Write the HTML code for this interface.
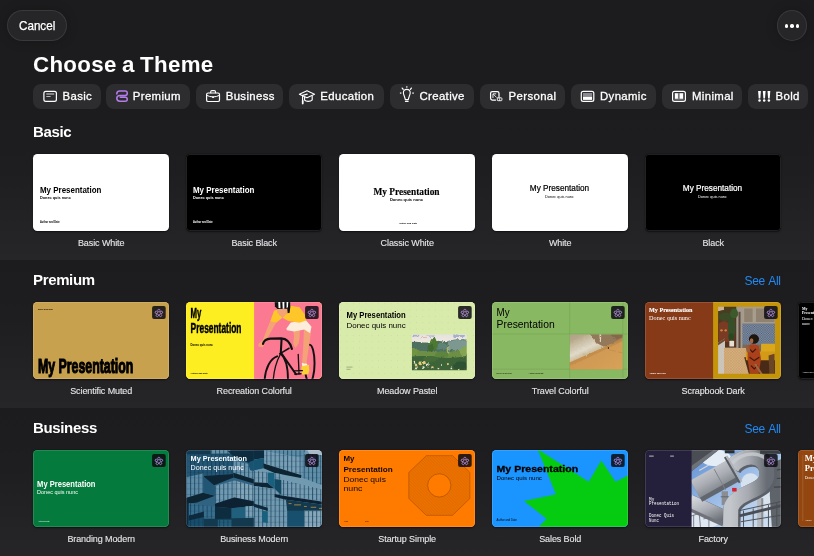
<!DOCTYPE html>
<html lang="en">
<head>
<meta charset="utf-8">
<title>Choose a Theme</title>
<style>
*{box-sizing:border-box;margin:0;padding:0}
html,body{width:814px;height:556px;overflow:hidden;background:#1c1c1e}
body{position:relative;font-family:"Liberation Sans",sans-serif;color:#fff;-webkit-font-smoothing:antialiased}
#root{position:absolute;left:0;top:0;width:814px;height:556px;will-change:transform}
.band{position:absolute;left:0;width:814px;height:148px;background:linear-gradient(#1c1c1e 0%,#1e1e20 40%,#262628 100%)}
.btn{position:absolute;background:#262628;border:1px solid rgba(255,255,255,.09);box-shadow:0 0 12px rgba(0,0,0,.22)}
.cancel{left:7px;top:10px;width:59.5px;height:30.5px;border-radius:15.5px}
.cancel span{position:absolute;left:10.6px;top:7.7px;font-size:12.6px;line-height:15px;letter-spacing:0;color:#fff;-webkit-text-stroke:.25px #fff;transform:scaleX(.925);transform-origin:0 0;white-space:nowrap}
.more{left:776.5px;top:10px;width:30.8px;height:30.8px;border-radius:50%}
.more i{position:absolute;top:13.3px;width:3.4px;height:3.4px;border-radius:50%;background:#fff}
h1{position:absolute;left:33px;top:50.6px;font-size:22.3px;line-height:28px;font-weight:bold;letter-spacing:.32px;word-spacing:-1.2px;white-space:nowrap}
.chip{position:absolute;top:83.5px;height:25px;border-radius:8px;background:#2d2d30}
.chip span{position:absolute;top:5.5px;font-size:11.4px;line-height:15px;white-space:nowrap;color:#fff;-webkit-text-stroke:.3px #fff;letter-spacing:.36px}
.chip svg{position:absolute;overflow:visible}
h2{position:absolute;left:33px;font-size:15px;line-height:18px;font-weight:bold;letter-spacing:-.35px;white-space:nowrap}
.see{position:absolute;left:744.5px;font-size:12px;line-height:15px;color:#1f8af5;letter-spacing:-.3px;word-spacing:.9px;white-space:nowrap}
.th{position:absolute;width:136.2px;height:76.5px;border-radius:4.4px;overflow:hidden;box-shadow:0 .5px 1.6px rgba(0,0,8,.55)}
.th:after{content:"";position:absolute;left:0;top:0;right:0;bottom:0;border-radius:4.4px;box-shadow:inset 0 0 0 .8px rgba(255,255,255,.17)}
.lb{position:absolute;width:136.2px;text-align:center;font-size:9px;line-height:12px;color:#e4e4e8;letter-spacing:-.1px;white-space:nowrap;-webkit-text-stroke:.12px #e4e4e8}
.th svg{position:absolute;left:0;top:0;width:136.2px;height:76.5px}
.pb{position:absolute;right:6px;top:6px;width:13px;height:13px;border-radius:2px;background:rgba(20,20,24,.92)}
</style>
</head>
<body>
<div id="root">
<div class="band" style="top:112px"></div>
<div class="band" style="top:260px"></div>
<div class="band" style="top:408px"></div>

<div class="btn cancel"><span>Cancel</span></div>
<div class="btn more"><i style="left:7.4px"></i><i style="left:12.9px"></i><i style="left:18.4px"></i></div>
<h1>Choose a Theme</h1>

<!-- chips -->
<div class="chip" style="left:33px;width:68px"><span style="left:29.5px">Basic</span></div>
<div class="chip" style="left:106.3px;width:84px"><span style="left:26.5px">Premium</span></div>
<div class="chip" style="left:196.2px;width:87px"><span style="left:29.5px">Business</span></div>
<div class="chip" style="left:288.9px;width:94.8px"><span style="left:31.4px">Education</span></div>
<div class="chip" style="left:389.7px;width:84px"><span style="left:29.8px">Creative</span></div>
<div class="chip" style="left:480px;width:85px"><span style="left:28.6px">Personal</span></div>
<div class="chip" style="left:570.8px;width:85.5px"><span style="left:29.2px">Dynamic</span></div>
<div class="chip" style="left:662px;width:80px"><span style="left:30px">Minimal</span></div>
<div class="chip" style="left:748.2px;width:60px"><span style="left:27.3px">Bold</span></div>

<svg class="icons" style="position:absolute;left:0;top:82px;width:814px;height:30px" viewBox="0 82 814 30" fill="none" stroke="#fff" stroke-width="1.2" stroke-linecap="round" stroke-linejoin="round">
<!-- basic -->
<rect x="43.9" y="91.3" width="12.5" height="10.1" rx="1.9"/>
<path d="M46.3 94H54.2" stroke="#b4b4b8" stroke-width="1.3" stroke-linecap="butt"/>
<path d="M46.3 96.5H50.6" stroke="#c8c8cc" stroke-width=".9" stroke-linecap="butt"/>
<!-- premium -->
<path d="M116.8 93.9C116.8 92.2 118 91 119.7 91H125.1A2.2 2.2 0 0 1 125.1 95.4H119.9C118 95.4 116.8 96.6 116.8 98.3C116.8 100 118 101.2 119.9 101.2H125.3A1.95 1.95 0 0 0 125.3 97.3H120.2" stroke="#b47bea" stroke-width="1.5"/>
<!-- business -->
<rect x="206.6" y="93" width="12.9" height="8.5" rx="1.6"/>
<path d="M210.7 92.8V91.8Q210.7 90.6 211.9 90.6H214.3Q215.5 90.6 215.5 91.8V92.8" stroke-width="1.1"/>
<path d="M206.8 95.4Q213.05 98.6 219.3 95.4" stroke-width="1"/>
<rect x="212.1" y="96.4" width="1.9" height="1.5" rx=".4" fill="#fff" stroke="none"/>
<!-- education -->
<path d="M299.4 94.2L307 90.7L314.5 94.2L307 97.7Z" stroke-width="1.15"/>
<path d="M307.2 94.1L302.6 95.4V103.6" stroke-width="1.15"/><path d="M302.7 100.8V103.5" stroke-width="1.7"/>
<path d="M304.6 97.2V100.2C306 101.9 310.6 101.9 312.2 99.9V96.2" stroke-width="1.15"/>
<!-- creative -->
<path d="M406.8 89.4C404.5 89.4 403.2 91 403.4 93C403.6 95 405 97.4 405.3 99.6H408.3C408.6 97.4 410 95 410.2 93C410.4 91 409.1 89.4 406.8 89.4Z" stroke-width="1.1"/>
<path d="M405.5 101.3H408.1" stroke-width="1.3"/>
<path d="M402.2 88.1L403.2 89.3M411.4 88.1L410.4 89.3" stroke-width="1.25"/>
<g fill="#e8e8ec" stroke="none"><rect x="406.15" y="86.2" width="1.3" height="1.5"/><rect x="399.9" y="92.4" width="1.5" height="1.4"/><rect x="412.3" y="92.4" width="1.5" height="1.4"/></g>
<!-- personal -->
<path d="M495.6 100H492.3Q490.6 100 490.6 98.3V93.2Q490.6 91.5 492.3 91.5H497.3Q499 91.5 499 93.2V96.4" stroke-width="1.25"/>
<path d="M492.95 98V93.85H496.2" stroke-width=".9" stroke-linecap="butt" stroke-linejoin="miter"/><path d="M493.3 94.2L496.6 97.5" stroke-width=".8" stroke-linecap="butt"/>
<rect x="497.3" y="97.8" width="4.6" height="2.9" rx=".7" stroke-width=".9"/>
<path d="M499.6 98V100.5" stroke-width=".7"/>
<!-- dynamic -->
<rect x="581.3" y="91.3" width="12.5" height="10.1" rx="1.9"/>
<rect x="583" y="93" width="9.1" height="3.3" fill="#8a8a90" stroke="none"/>
<rect x="583" y="96.6" width="9.1" height="3.3" fill="#fff" stroke="none"/>
<!-- minimal -->
<rect x="672.6" y="91.3" width="12.8" height="10.1" rx="1.9"/>
<rect x="674.4" y="93" width="9.2" height="6.8" fill="#77777c" stroke="none"/>
<rect x="675" y="93.3" width="2.9" height="5.4" fill="#fff" stroke="none"/>
<rect x="679.7" y="93.3" width="3.3" height="5.4" fill="#fff" stroke="none"/>
<!-- bold -->
<g fill="#fff" stroke="none">
<path d="M758.1 91H760.9L760.3 98.5H758.7Z"/><circle cx="759.5" cy="100.5" r="1.25"/>
<path d="M762.8 91H765.6L765 98.5H763.4Z"/><circle cx="764.2" cy="100.5" r="1.25"/>
<path d="M767.5 91H770.3L769.7 98.5H768.1Z"/><circle cx="768.9" cy="100.5" r="1.25"/>
</g>
</svg>

<!-- BASIC -->
<h2 style="top:122.5px">Basic</h2>
<div class="th" style="left:33.1px;top:154.3px;background:#fff"><svg viewBox="0 0 136.2 76.5" preserveAspectRatio="none"><g transform="translate(-.1,-.3)"><text x="7.1" y="39.1" font-family="Liberation Sans, sans-serif" font-size="9.2" fill="#000" font-weight="bold" textLength="61.4" lengthAdjust="spacingAndGlyphs">My Presentation</text>
<text x="7.1" y="45.6" font-family="Liberation Sans, sans-serif" font-size="4.05" fill="#000" font-weight="bold" textLength="30.8" lengthAdjust="spacingAndGlyphs">Donec quis nunc</text>
<text x="7.1" y="69.8" font-family="Liberation Sans, sans-serif" font-size="2.6" fill="#000" font-weight="bold" textLength="19.8" lengthAdjust="spacingAndGlyphs">Author and Date</text>
</g></svg></div>
<div class="th" style="left:186.1px;top:154.3px;background:#000"><svg viewBox="0 0 136.2 76.5" preserveAspectRatio="none"><g transform="translate(-.1,-.3)"><text x="7.1" y="39.1" font-family="Liberation Sans, sans-serif" font-size="9.2" fill="#fff" font-weight="bold" textLength="61.4" lengthAdjust="spacingAndGlyphs">My Presentation</text>
<text x="7.1" y="45.6" font-family="Liberation Sans, sans-serif" font-size="4.05" fill="#fff" font-weight="bold" textLength="30.8" lengthAdjust="spacingAndGlyphs">Donec quis nunc</text>
<text x="7.1" y="69.8" font-family="Liberation Sans, sans-serif" font-size="2.6" fill="#fff" font-weight="bold" textLength="19.8" lengthAdjust="spacingAndGlyphs">Author and Date</text>
</g></svg></div>
<div class="th" style="left:339.1px;top:154.3px;background:#fff"><svg viewBox="0 0 136.2 76.5" preserveAspectRatio="none"><g transform="translate(-.1,-.3)"><text x="67.6" y="41.2" font-family="Liberation Serif, serif" font-size="10.2" fill="#000" font-weight="bold" text-anchor="middle" textLength="66.2" lengthAdjust="spacingAndGlyphs" stroke="#000" stroke-width="0.15">My Presentation</text>
<text x="67.6" y="47.7" font-family="Liberation Sans, sans-serif" font-size="4.2" fill="#000" font-weight="bold" text-anchor="middle" textLength="33.2" lengthAdjust="spacingAndGlyphs">Donec quis nunc</text>
<text x="69" y="70" font-family="Liberation Sans, sans-serif" font-size="2.4" fill="#000" font-weight="bold" text-anchor="middle" textLength="18.5" lengthAdjust="spacingAndGlyphs">Author and Date</text>
</g></svg></div>
<div class="th" style="left:492.1px;top:154.3px;background:#fff"><svg viewBox="0 0 136.2 76.5" preserveAspectRatio="none"><g transform="translate(-.1,-.3)"><text x="67.6" y="37.7" font-family="Liberation Sans, sans-serif" font-size="9.2" fill="#000" text-anchor="middle" textLength="59.4" lengthAdjust="spacingAndGlyphs" stroke="#000" stroke-width="0.22">My Presentation</text>
<text x="67.6" y="44.2" font-family="Liberation Sans, sans-serif" font-size="4.3" fill="#000" text-anchor="middle" textLength="29" lengthAdjust="spacingAndGlyphs">Donec quis nunc</text>
</g></svg></div>
<div class="th" style="left:645.1px;top:154.3px;background:#000"><svg viewBox="0 0 136.2 76.5" preserveAspectRatio="none"><g transform="translate(-.1,-.3)"><text x="67.6" y="37.7" font-family="Liberation Sans, sans-serif" font-size="9.2" fill="#fff" text-anchor="middle" textLength="59.4" lengthAdjust="spacingAndGlyphs" stroke="#fff" stroke-width="0.22">My Presentation</text>
<text x="67.6" y="44.2" font-family="Liberation Sans, sans-serif" font-size="4.3" fill="#fff" text-anchor="middle" textLength="29" lengthAdjust="spacingAndGlyphs">Donec quis nunc</text>
</g></svg></div>

<div class="lb" style="left:33.1px;top:237px">Basic White</div>
<div class="lb" style="left:186.1px;top:237px">Basic Black</div>
<div class="lb" style="left:339.1px;top:237px">Classic White</div>
<div class="lb" style="left:492.1px;top:237px">White</div>
<div class="lb" style="left:645.1px;top:237px">Black</div>

<!-- PREMIUM -->
<h2 style="top:270.5px">Premium</h2>
<div class="see" style="top:273.5px">See All</div>
<div class="th" style="left:33.1px;top:302.3px;background:#c9a04e"><svg viewBox="0 0 136.2 76.5" preserveAspectRatio="none"><g transform="translate(-.1,-.3)"><rect x="-1" y="-1" width="139" height="79" fill="#c8a14f"/>
<text x="5" y="71.2" font-family="Liberation Sans, sans-serif" font-size="20.5" fill="#000" font-weight="bold" textLength="95.5" lengthAdjust="spacingAndGlyphs" stroke="#000" stroke-width="1.15">My Presentation</text>
<text x="5" y="7.9" font-family="Liberation Sans, sans-serif" font-size="2.2" fill="#000" font-weight="bold" textLength="15" lengthAdjust="spacingAndGlyphs">Donec quis nunc</text>
<rect x="119.2" y="4.2" width="13.6" height="13.2" rx="2" fill="rgba(12,12,16,.86)"/><g fill="none" stroke="#bb93ea" stroke-width="0.7"><ellipse cx="126.0" cy="8.85" rx="1.2" ry="1.3" transform="rotate(0 126.0 11.5)"/><ellipse cx="126.0" cy="8.85" rx="1.2" ry="1.3" transform="rotate(72 126.0 11.5)"/><ellipse cx="126.0" cy="8.85" rx="1.2" ry="1.3" transform="rotate(144 126.0 11.5)"/><ellipse cx="126.0" cy="8.85" rx="1.2" ry="1.3" transform="rotate(216 126.0 11.5)"/><ellipse cx="126.0" cy="8.85" rx="1.2" ry="1.3" transform="rotate(288 126.0 11.5)"/></g>
</g></svg></div>
<div class="th" style="left:186.1px;top:302.3px;background:#fbee1c"><svg viewBox="0 0 136.2 76.5" preserveAspectRatio="none"><g transform="translate(-.1,-.3)"><rect x="-1" y="-1" width="69.4" height="79" fill="#fcee21"/>
<rect x="68.2" y="-1" width="70" height="79" fill="#fb7a92"/>
<g transform="translate(68,0) scale(0.1385)">
<!-- rear wheel -->
<ellipse cx="402" cy="445" rx="36" ry="135" fill="none" stroke="#111" stroke-width="14"/>
<!-- far leg -->
<path d="M362 196L412 222L396 330L378 452L348 442L356 330Z" fill="#f4a377"/>
<!-- shoe + sock -->
<path d="M346 442L384 448L388 474L350 470Z" fill="#fff3e2"/>
<path d="M344 466L398 456L400 500L392 524L350 528L342 500Z" fill="#fbd034"/>
<!-- back arm / thigh -->
<path d="M282 190L332 180L330 262L322 304L300 334L284 304L290 250Z" fill="#f4a377"/>
<!-- shorts -->
<path d="M234 196L266 150L376 134L416 180L406 228L364 200L292 216L240 206Z" fill="#fdeedb"/>
<!-- front arm -->
<path d="M118 140L160 152L98 262L64 330L30 322L36 300L62 282Z" fill="#f4a377"/>
<!-- jersey -->
<path d="M118 142L146 64L170 58L206 116L250 60L262 30L330 40L366 90L378 136L330 152L250 140L206 116L160 152Z" fill="#ffc629"/>
<!-- face/neck -->
<path d="M164 44L246 44L240 86L206 116L186 100L170 80Z" fill="#f4a377"/>
<path d="M240 36L264 30L258 80L244 84Z" fill="#111"/>
<!-- helmet -->
<path d="M150 0L262 0L262 30L240 50L170 52L152 34Z" fill="#111"/>
<path d="M176 2L190 2L192 48L178 46ZM206 2L220 2L220 50L208 50ZM236 2L248 2L246 40L236 46Z" fill="#fff"/>
<!-- bike -->
<g fill="none" stroke="#111" stroke-linecap="round" stroke-linejoin="round">
<path d="M66 304C72 278 92 268 120 266L196 264C240 266 262 290 274 340" stroke-width="16.2"/>
<path d="M200 268L194 372" stroke-width="14.9"/>
<path d="M186 376L254 336" stroke-width="10.8"/>
<path d="M78 560C84 480 118 410 168 394" stroke-width="13.5"/>
<path d="M140 560C146 490 164 430 192 378" stroke-width="9.5"/>
<path d="M194 374C232 410 246 480 246 560" stroke-width="13.5"/>
<path d="M198 372L304 524" stroke-width="14.9"/>
<path d="M320 380L326 524M290 500L350 498M296 524L340 520" stroke-width="9.5"/>
</g>
</g>
<text x="4.7" y="16.8" font-family="Liberation Sans, sans-serif" font-size="14.6" fill="#000" font-weight="bold" textLength="10.8" lengthAdjust="spacingAndGlyphs" stroke="#000" stroke-width="0.5">My</text>
<text x="4.7" y="31.6" font-family="Liberation Sans, sans-serif" font-size="14.6" fill="#000" font-weight="bold" textLength="50.9" lengthAdjust="spacingAndGlyphs" stroke="#000" stroke-width="0.5">Presentation</text>
<text x="4.7" y="44" font-family="Liberation Sans, sans-serif" font-size="3.1" fill="#000" font-weight="bold" textLength="22.3" lengthAdjust="spacingAndGlyphs">Donec quis nunc</text>
<text x="4.7" y="72.1" font-family="Liberation Sans, sans-serif" font-size="2.5" fill="#000" font-weight="bold" textLength="17.2" lengthAdjust="spacingAndGlyphs">Author and Date</text>
<rect x="119.2" y="4.2" width="13.6" height="13.2" rx="2" fill="rgba(12,12,16,.86)"/><g fill="none" stroke="#bb93ea" stroke-width="0.7"><ellipse cx="126.0" cy="8.85" rx="1.2" ry="1.3" transform="rotate(0 126.0 11.5)"/><ellipse cx="126.0" cy="8.85" rx="1.2" ry="1.3" transform="rotate(72 126.0 11.5)"/><ellipse cx="126.0" cy="8.85" rx="1.2" ry="1.3" transform="rotate(144 126.0 11.5)"/><ellipse cx="126.0" cy="8.85" rx="1.2" ry="1.3" transform="rotate(216 126.0 11.5)"/><ellipse cx="126.0" cy="8.85" rx="1.2" ry="1.3" transform="rotate(288 126.0 11.5)"/></g>
</g></svg></div>
<div class="th" style="left:339.1px;top:302.3px;background:#d7e8a8"><svg viewBox="0 0 136.2 76.5" preserveAspectRatio="none"><g transform="translate(-.1,-.3)"><defs>
<pattern id="mdots" x="1.2" y="1.6" width="6.33" height="6.33" patternUnits="userSpaceOnUse"><circle cx=".5" cy=".5" r=".38" fill="#b2c886"/></pattern>
<linearGradient id="msky" x1="0" y1="0" x2="0" y2="1"><stop offset="0" stop-color="#e2dfe6"/><stop offset="1" stop-color="#f0e9dc"/></linearGradient>
<filter id="mpaint" x="-5%" y="-5%" width="110%" height="110%"><feTurbulence type="fractalNoise" baseFrequency=".03" numOctaves="2" seed="4" result="n"/><feDisplacementMap in="SourceGraphic" in2="n" scale="40" xChannelSelector="R" yChannelSelector="G" result="d"/><feGaussianBlur in="d" stdDeviation="4"/></filter>
<clipPath id="mclip"><rect x="82" y="55" width="637" height="416"/></clipPath>
</defs>
<rect x="-1" y="-1" width="139" height="79" fill="#d9ebaa"/>
<rect x="-1" y="-1" width="139" height="79" fill="url(#mdots)"/>
<g transform="translate(66,28) scale(0.086)" clip-path="url(#mclip)"><g filter="url(#mpaint)">
<rect x="40" y="20" width="720" height="490" fill="#44693a"/>
<rect x="40" y="20" width="720" height="130" fill="url(#msky)"/>
<path d="M82 60H170L160 80H82ZM250 66H350L340 82H250ZM560 62H700L690 84H570Z" fill="#9aa0cc" opacity=".8"/>
<path d="M180 84H250L240 96H190Z" fill="#d9a7a7" opacity=".7"/>
<!-- far trees -->
<path d="M40 150Q120 130 200 150T330 140T480 150L500 130Q600 100 760 120V270H40Z" fill="#4d7060"/>
<path d="M500 150Q560 110 640 120T760 110V230Q620 250 500 230Z" fill="#7b9890"/>
<path d="M380 160Q430 140 490 170V230H380Z" fill="#5f8374"/>
<!-- center tree -->
<ellipse cx="335" cy="165" rx="46" ry="70" fill="#4e7a32"/>
<ellipse cx="300" cy="215" rx="36" ry="40" fill="#3f6a30"/>
<!-- mid field -->
<path d="M40 250Q180 236 330 256T560 250T760 236V330H40Z" fill="#6c8f45"/>
<ellipse cx="110" cy="258" rx="40" ry="44" fill="#6f9442"/>
<ellipse cx="690" cy="250" rx="50" ry="60" fill="#86a552"/>
<rect x="486" y="200" width="30" height="80" fill="#a8b070"/>
<ellipse cx="430" cy="290" rx="80" ry="40" fill="#5d8540"/>
<!-- foreground -->
<path d="M40 320Q200 290 360 318T760 300V510H40Z" fill="#3e6338"/>
<ellipse cx="650" cy="420" rx="90" ry="50" fill="#2f5230"/>
<ellipse cx="300" cy="340" rx="90" ry="34" fill="#456d38"/>
<g fill="#e3cc7c"><circle cx="180" cy="390" r="22"/><circle cx="225" cy="380" r="16"/><circle cx="130" cy="412" r="16"/><circle cx="320" cy="440" r="14"/><circle cx="625" cy="462" r="10"/><circle cx="500" cy="400" r="12"/></g>
<g fill="#e8e4d4"><circle cx="110" cy="380" r="12"/><circle cx="260" cy="410" r="16"/><circle cx="215" cy="440" r="14"/><circle cx="130" cy="450" r="12"/><circle cx="420" cy="410" r="12"/><circle cx="540" cy="450" r="10"/><circle cx="390" cy="450" r="10"/></g>
</g></g>
<text x="7.6" y="16.8" font-family="Liberation Sans, sans-serif" font-size="8.2" fill="#000" font-weight="bold" textLength="59.2" lengthAdjust="spacingAndGlyphs">My Presentation</text>
<text x="7.6" y="26.1" font-family="Liberation Sans, sans-serif" font-size="8" fill="#000" textLength="59.2" lengthAdjust="spacingAndGlyphs">Donec quis nunc</text>
<path d="M7.6 65.4H13.6M7.6 67.6H11.6" stroke="#5b6a44" stroke-width=".45"/>
<rect x="119.2" y="4.2" width="13.6" height="13.2" rx="2" fill="rgba(12,12,16,.86)"/><g fill="none" stroke="#bb93ea" stroke-width="0.7"><ellipse cx="126.0" cy="8.85" rx="1.2" ry="1.3" transform="rotate(0 126.0 11.5)"/><ellipse cx="126.0" cy="8.85" rx="1.2" ry="1.3" transform="rotate(72 126.0 11.5)"/><ellipse cx="126.0" cy="8.85" rx="1.2" ry="1.3" transform="rotate(144 126.0 11.5)"/><ellipse cx="126.0" cy="8.85" rx="1.2" ry="1.3" transform="rotate(216 126.0 11.5)"/><ellipse cx="126.0" cy="8.85" rx="1.2" ry="1.3" transform="rotate(288 126.0 11.5)"/></g>
</g></svg></div>
<div class="th" style="left:492.1px;top:302.3px;background:#8ab863"><svg viewBox="0 0 136.2 76.5" preserveAspectRatio="none"><g transform="translate(-.1,-.3)"><defs>
<linearGradient id="tsand" x1="0" y1="0" x2="1" y2="1"><stop offset="0" stop-color="#c98f4b"/><stop offset="1" stop-color="#d8a35b"/></linearGradient>
<linearGradient id="tfoam" x1="97" y1="53" x2="86" y2="29" gradientUnits="userSpaceOnUse"><stop offset="0" stop-color="#c9b995"/><stop offset=".25" stop-color="#e0d9c8"/><stop offset=".6" stop-color="#c6ba9f"/><stop offset="1" stop-color="#a08f70"/></linearGradient>
<filter id="tpaint" x="-5%" y="-5%" width="110%" height="110%"><feTurbulence type="fractalNoise" baseFrequency=".35" numOctaves="2" seed="7" result="n"/><feDisplacementMap in="SourceGraphic" in2="n" scale="2.6" xChannelSelector="R" yChannelSelector="G" result="d"/><feGaussianBlur in="d" stdDeviation=".45"/></filter>
<clipPath id="tclip"><rect x="77.9" y="32.85" width="52.8" height="35.05"/></clipPath>
</defs>
<rect x="-1" y="-1" width="139" height="79" fill="#89b862"/>
<g stroke="#6d994c" stroke-width=".4"><path d="M0 32.3H136.2M0 67.4H136.2M77.8 0V76.5M131 0V76.5"/></g>
<g clip-path="url(#tclip)"><g filter="url(#tpaint)">
<rect x="74" y="29" width="60" height="42" fill="url(#tsand)"/>
<path d="M74 29H134V36.6L129.8 36.6L112.6 45.2L108.3 47.3L93.7 53.8L77.8 60.7L74 62Z" fill="url(#tfoam)"/>
<path d="M96 29H134V36.8L122 42L112.6 45.2L104 41Z" fill="#94785a"/>
<path d="M114 29H134V34L124 38Z" fill="#86684a"/>
<path d="M74 29H100L80 38L74 40Z" fill="#b5a78c" opacity=".8"/>
<path d="M107.6 32.5L109.3 32.5L109 40L107.9 40Z" fill="#ded8cc"/>
<path d="M77.8 60.7L93.7 53.8L108.3 47.3L112.6 45.2L129.8 36.6L134 35V38L113 48L94 57L77.8 64Z" fill="#bf8b4a" opacity=".8"/>
<path d="M117 48L134 52" stroke="#b98443" stroke-width=".5"/>
<rect x="116" y="45.3" width=".9" height="2" fill="#2e241c"/>
</g></g>
<text x="4.7" y="14" font-family="Liberation Sans, sans-serif" font-size="10.6" fill="#000" textLength="13" lengthAdjust="spacingAndGlyphs">My</text>
<text x="4.7" y="26.4" font-family="Liberation Sans, sans-serif" font-size="10.6" fill="#000" textLength="58.1" lengthAdjust="spacingAndGlyphs">Presentation</text>
<text x="4.7" y="72" font-family="Liberation Sans, sans-serif" font-size="2.2" fill="#000" textLength="15.2" lengthAdjust="spacingAndGlyphs">Donec quis nunc</text>
<text x="36.7" y="72" font-family="Liberation Sans, sans-serif" font-size="2.2" fill="#000" textLength="15.2" lengthAdjust="spacingAndGlyphs">Author and Date</text>
<rect x="119.2" y="4.2" width="13.6" height="13.2" rx="2" fill="rgba(12,12,16,.86)"/><g fill="none" stroke="#bb93ea" stroke-width="0.7"><ellipse cx="126.0" cy="8.85" rx="1.2" ry="1.3" transform="rotate(0 126.0 11.5)"/><ellipse cx="126.0" cy="8.85" rx="1.2" ry="1.3" transform="rotate(72 126.0 11.5)"/><ellipse cx="126.0" cy="8.85" rx="1.2" ry="1.3" transform="rotate(144 126.0 11.5)"/><ellipse cx="126.0" cy="8.85" rx="1.2" ry="1.3" transform="rotate(216 126.0 11.5)"/><ellipse cx="126.0" cy="8.85" rx="1.2" ry="1.3" transform="rotate(288 126.0 11.5)"/></g>
</g></svg></div>
<div class="th" style="left:645.1px;top:302.3px;background:#84391a"><svg viewBox="0 0 136.2 76.5" preserveAspectRatio="none"><g transform="translate(-.1,-.3)"><defs>
<clipPath id="sclip"><rect x="435" y="30" width="338" height="398"/></clipPath>
<pattern id="stile" width="14" height="14" patternUnits="userSpaceOnUse"><rect width="14" height="14" fill="#63728a"/><path d="M0 7H14M7 0V14" stroke="#a9b0b6" stroke-width="2"/><circle cx="7" cy="7" r="2.5" fill="#34496a"/></pattern>
<pattern id="sfloor" width="16" height="16" patternUnits="userSpaceOnUse"><rect width="16" height="16" fill="#d6b07e"/><path d="M0 0L16 16M16 0L0 16" stroke="#b98f5a" stroke-width="2"/></pattern>
<filter id="sblur"><feGaussianBlur stdDeviation="2.2"/></filter>
</defs>
<rect x="-1" y="-1" width="69.4" height="79" fill="#873a17"/>
<rect x="68.2" y="-1" width="70" height="79" fill="#c4940a"/>
<g transform="scale(0.1683046683046683)" clip-path="url(#sclip)"><g filter="url(#sblur)">
<rect x="425" y="20" width="358" height="418" fill="#7c6b56"/>
<!-- upper wall right -->
<rect x="575" y="20" width="210" height="112" fill="#a89c8c"/>
<path d="M590 40H640V120H590ZM660 40H770V120H660Z" fill="#8f8270"/>
<!-- tile wall -->
<rect x="575" y="130" width="210" height="125" fill="url(#stile)"/>
<!-- arch left -->
<rect x="425" y="20" width="125" height="250" fill="#5a3320"/>
<path d="M425 20H470V50L425 60Z" fill="#c8b596"/><path d="M470 20H550V100L470 110L425 120V60L470 50Z" fill="#4b3a20"/>
<path d="M440 130Q470 100 500 130V240H440Z" fill="#7a3a22"/>
<circle cx="455" cy="170" r="7" fill="#c98a4a"/><circle cx="480" cy="170" r="7" fill="#c98a4a"/>
<!-- column -->
<rect x="543" y="20" width="36" height="290" fill="#a39a90"/>
<rect x="556" y="60" width="12" height="230" fill="#5e4a3c"/>
<!-- plant -->
<ellipse cx="516" cy="150" rx="22" ry="80" fill="#34502a"/><ellipse cx="480" cy="90" rx="40" ry="26" fill="#3a4c26"/><ellipse cx="530" cy="70" rx="24" ry="30" fill="#3d5a2b"/>
<ellipse cx="512" cy="210" rx="16" ry="22" fill="#2c4722"/>
<rect x="502" y="232" width="28" height="34" rx="5" fill="#e6e0d2"/>
<!-- railing left -->
<path d="M425 250L476 218V438H425Z" fill="#cbc4ba"/><path d="M425 250L476 218V232L425 266Z" fill="#6a4a30"/>
<!-- floor -->
<path d="M470 275H600L640 438H470Z" fill="url(#sfloor)"/>
<!-- dark lower right -->
<path d="M590 330H785V438H620Z" fill="#4a2c17"/>
<!-- sofa -->
<rect x="690" y="250" width="95" height="60" rx="6" fill="#dba71e"/>
<rect x="600" y="296" width="185" height="52" rx="6" fill="#d29a16"/>
<path d="M735 320L770 310V438H740Z" fill="#6a4526"/>
<!-- woman -->
<ellipse cx="648" cy="222" rx="30" ry="28" fill="#1b1310"/>
<ellipse cx="634" cy="232" rx="11" ry="15" fill="#a5683f"/>
<path d="M612 262Q640 244 676 262L690 340L676 428H624L610 340Z" fill="#aa3f1a"/>
<path d="M620 280L640 300L660 280M622 330L650 350L680 330M630 380L650 400L670 380" stroke="#3a1a10" stroke-width="7" fill="none"/>
<path d="M600 260L620 262L628 300L606 300Z" fill="#9a5a36"/>
<path d="M655 370L700 440" stroke="#9b6b43" stroke-width="12"/>
</g></g>
<text x="4.2" y="10.3" font-family="Liberation Serif, serif" font-size="6.3" fill="#fff" font-weight="bold" textLength="43.3" lengthAdjust="spacingAndGlyphs" stroke="#fff" stroke-width="0.12">My Presentation</text>
<text x="4.2" y="18.3" font-family="Liberation Serif, serif" font-size="6.6" fill="#fff" textLength="41.6" lengthAdjust="spacingAndGlyphs">Donec quis nunc</text>
<text x="4.2" y="72" font-family="Liberation Serif, serif" font-size="2.5" fill="#fff" font-weight="bold" textLength="16.8" lengthAdjust="spacingAndGlyphs">Author and Date</text>
<rect x="119.2" y="4.2" width="13.6" height="13.2" rx="2" fill="rgba(12,12,16,.86)"/><g fill="none" stroke="#bb93ea" stroke-width="0.7"><ellipse cx="126.0" cy="8.85" rx="1.2" ry="1.3" transform="rotate(0 126.0 11.5)"/><ellipse cx="126.0" cy="8.85" rx="1.2" ry="1.3" transform="rotate(72 126.0 11.5)"/><ellipse cx="126.0" cy="8.85" rx="1.2" ry="1.3" transform="rotate(144 126.0 11.5)"/><ellipse cx="126.0" cy="8.85" rx="1.2" ry="1.3" transform="rotate(216 126.0 11.5)"/><ellipse cx="126.0" cy="8.85" rx="1.2" ry="1.3" transform="rotate(288 126.0 11.5)"/></g>
</g></svg></div>
<div class="th" style="left:798.1px;top:302.3px;background:#000"><svg viewBox="0 0 136.2 76.5" preserveAspectRatio="none"><g transform="translate(-.1,-.3)"><rect x="-1" y="-1" width="139" height="79" fill="#000"/>
<text x="4.1" y="7.9" font-family="Liberation Serif, serif" font-size="3.8" fill="#fff" font-weight="bold">My</text>
<text x="4.1" y="12.3" font-family="Liberation Serif, serif" font-size="3.8" fill="#fff" font-weight="bold">Presentation</text>
<text x="4.1" y="18.7" font-family="Liberation Serif, serif" font-size="4.2" fill="#fff">Donec quis</text>
<text x="4.1" y="23.6" font-family="Liberation Serif, serif" font-size="4.2" fill="#fff">nunc</text>
<text x="4.1" y="71.8" font-family="Liberation Serif, serif" font-size="2.4" fill="#fff">Author and Date</text>
</g></svg></div>
<div class="lb" style="left:33.1px;top:385px">Scientific Muted</div>
<div class="lb" style="left:186.1px;top:385px">Recreation Colorful</div>
<div class="lb" style="left:339.1px;top:385px">Meadow Pastel</div>
<div class="lb" style="left:492.1px;top:385px">Travel Colorful</div>
<div class="lb" style="left:645.1px;top:385px">Scrapbook Dark</div>

<!-- BUSINESS -->
<h2 style="top:418.5px">Business</h2>
<div class="see" style="top:421.5px">See All</div>
<div class="th" style="left:33.1px;top:450.3px;background:#0c7f3e"><svg viewBox="0 0 136.2 76.5" preserveAspectRatio="none"><g transform="translate(-.1,-.3)"><rect x="-1" y="-1" width="139" height="79" fill="#047a3d"/>
<text x="4.2" y="37.4" font-family="Liberation Sans, sans-serif" font-size="8.3" fill="#fff" font-weight="bold" textLength="58.4" lengthAdjust="spacingAndGlyphs">My Presentation</text>
<text x="4.2" y="44.1" font-family="Liberation Sans, sans-serif" font-size="6" fill="#fff" textLength="40.9" lengthAdjust="spacingAndGlyphs">Donec quis nunc</text>
<text x="5.4" y="72" font-family="Liberation Sans, sans-serif" font-size="2.2" fill="#fff" textLength="11.4" lengthAdjust="spacingAndGlyphs">Author and Date</text>
<rect x="119.2" y="4.2" width="13.6" height="13.2" rx="2" fill="rgba(12,12,16,.86)"/><g fill="none" stroke="#bb93ea" stroke-width="0.7"><ellipse cx="126.0" cy="8.85" rx="1.2" ry="1.3" transform="rotate(0 126.0 11.5)"/><ellipse cx="126.0" cy="8.85" rx="1.2" ry="1.3" transform="rotate(72 126.0 11.5)"/><ellipse cx="126.0" cy="8.85" rx="1.2" ry="1.3" transform="rotate(144 126.0 11.5)"/><ellipse cx="126.0" cy="8.85" rx="1.2" ry="1.3" transform="rotate(216 126.0 11.5)"/><ellipse cx="126.0" cy="8.85" rx="1.2" ry="1.3" transform="rotate(288 126.0 11.5)"/></g>
</g></svg></div>
<div class="th" style="left:186.1px;top:450.3px;background:#3d6f8e"><svg viewBox="0 0 136.2 76.5" preserveAspectRatio="none"><g transform="translate(-.1,-.3)"><defs>
<pattern id="mull" width="30" height="40" patternUnits="userSpaceOnUse"><rect width="7" height="40" fill="#0f3650" opacity=".7"/><rect y="0" width="30" height="4" fill="#0f3650" opacity=".35"/></pattern>
<filter id="bblur"><feGaussianBlur stdDeviation="2.2"/></filter>
<clipPath id="bcl"><rect x="-2" y="-5" width="500" height="570"/></clipPath>
<clipPath id="bcr"><rect x="-1" y="-5" width="510" height="570"/></clipPath>
</defs>
<g transform="scale(0.1385)" clip-path="url(#bcl)"><g filter="url(#bblur)">
<rect x="-10" y="-10" width="520" height="580" fill="#3f7494"/>
<polygon points="0,35 340,35 340,175 130,190 0,200" fill="#2f6482"/><polygon points="0,35 340,35 340,175 130,190 0,200" fill="url(#mull)"/>
<polygon points="-10,-10 510,-10 510,20 340,35 0,35 -10,35" fill="#15394c"/>
<polygon points="180,-5 320,-5 320,28 180,30" fill="#8db6cc"/><polygon points="180,-5 320,-5 320,28 180,30" fill="url(#mull)"/>
<polygon points="300,8 510,8 510,75 464,100 342,45" fill="#0d2636"/>
<polygon points="464,85 510,72 510,160 464,149 448,101" fill="#1b5f7d"/>
<polygon points="347,80 448,101 464,149 510,160 510,220 342,167" fill="#93bcd2"/><polygon points="347,80 448,101 464,149 510,160 510,220 342,167" fill="url(#mull)"/>
<polygon points="342,167 510,220 510,250 345,200" fill="#0b1a24"/>
<polygon points="130,190 340,175 345,200 190,262 130,232" fill="#0d1c27"/>
<polygon points="-10,202 125,172 125,310 -10,352" fill="#82aec8"/><polygon points="-10,202 125,172 125,310 -10,352" fill="url(#mull)"/>
<polygon points="-10,352 125,310 210,332 80,382 -10,394" fill="#0c1a24"/>
<polygon points="125,190 210,262 210,332 125,310" fill="#2a6380"/>
<polygon points="210,262 350,222 350,345 210,390" fill="#9cc3d8"/><polygon points="210,262 350,222 350,345 210,390" fill="url(#mull)"/>
<polygon points="350,222 510,264 510,377 350,345" fill="#b3d2e2"/><polygon points="350,222 510,264 510,377 350,345" fill="url(#mull)"/>
<polygon points="210,390 350,345 510,377 510,404 330,422 210,412" fill="#0b1923"/>
<polygon points="20,385 210,412 210,500 20,470" fill="#4b85a5"/><polygon points="20,385 210,412 210,500 20,470" fill="url(#mull)"/>
<polygon points="-10,392 20,385 20,570 -10,570" fill="#0d2230"/>
<polygon points="20,470 130,486 130,570 20,570" fill="#1f5673"/><polygon points="20,470 130,486 130,570 20,570" fill="url(#mull)"/>
<polygon points="20,476 130,446 130,486 20,512" fill="#0e2230"/>
<polygon points="210,412 330,422 330,500 210,500" fill="#0f2531"/>
<polygon points="330,422 430,412 430,500 330,500" fill="#2b6f8c"/>
<polygon points="430,408 510,404 510,492 430,492" fill="#a9cbde"/><polygon points="430,408 510,404 510,492 430,492" fill="url(#mull)"/>
<polygon points="130,500 510,492 510,570 130,570" fill="#123748"/>
<polygon points="230,505 330,505 330,570 230,570" fill="#2d6c88"/><polygon points="230,505 330,505 330,570 230,570" fill="url(#mull)"/>
</g></g>
<g transform="translate(68,0) scale(0.1385)" clip-path="url(#bcr)"><g filter="url(#bblur)">
<rect x="-2" y="-10" width="520" height="580" fill="#9cc2d6"/>
<polygon points="-2,-10 75,-10 75,60 -2,72" fill="#0d2636"/>
<polygon points="-2,72 75,60 75,100 70,134 -2,150" fill="#1b5f7d"/>
<polygon points="75,-10 380,-10 345,60 75,10" fill="#7fb0c9"/><polygon points="75,-10 380,-10 345,60 75,10" fill="url(#mull)"/>
<polygon points="75,10 345,60 345,185 75,100" fill="#a5c9dc"/><polygon points="75,10 345,60 345,185 75,100" fill="url(#mull)"/>
<polygon points="70,100 345,185 340,204 150,168 70,134" fill="#0b1a24"/>
<polygon points="345,30 400,30 510,42 510,262 345,200" fill="#86b4cc"/><polygon points="345,30 400,30 510,42 510,262 345,200" fill="url(#mull)"/>
<polygon points="380,-10 510,-10 510,42 400,30" fill="#eef3f7"/>
<polygon points="-2,150 100,165 100,240 -2,235" fill="#a9cbdd"/><polygon points="-2,150 100,165 100,240 -2,235" fill="url(#mull)"/>
<polygon points="-2,235 100,240 150,282 -2,262" fill="#0c1c27"/>
<polygon points="100,165 150,168 150,282 100,240" fill="#1f6f8f"/>
<polygon points="150,168 200,178 200,218 150,212" fill="#a4c7da"/><polygon points="150,168 200,178 200,218 150,212" fill="url(#mull)"/>
<polygon points="150,212 200,218 200,330 150,320" fill="#155068"/>
<polygon points="200,215 510,292 510,374 200,330" fill="#a5c8db"/><polygon points="200,215 510,292 510,374 200,330" fill="url(#mull)"/>
<polygon points="-2,262 150,282 232,362 240,570 -2,570" fill="#9cc2d6"/><polygon points="-2,262 150,282 232,362 240,570 -2,570" fill="url(#mull)"/>
<polygon points="150,320 200,330 510,377 510,398 232,362 150,342" fill="#0b1923"/>
<polygon points="-2,388 100,420 100,442 -2,412" fill="#0d212d"/>
<polygon points="60,440 100,446 100,530 60,524" fill="#1f6f8f"/>
<polygon points="232,362 510,398 510,442 240,442" fill="#123748"/>
<polygon points="240,440 362,440 362,570 240,570" fill="#1e5a74"/>
<polygon points="362,440 510,440 510,570 362,570" fill="#b9d5e3"/><polygon points="362,440 510,440 510,570 362,570" fill="url(#mull)"/>
<g fill="#eea53a"><rect x="250" y="386" width="22" height="7"/><rect x="290" y="395" width="50" height="7"/><rect x="362" y="406" width="20" height="7"/><rect x="410" y="412" width="40" height="7"/><rect x="470" y="420" width="26" height="7"/></g>
</g></g>
<rect x="-1" y="-1" width="139" height="79" fill="#0c3a5a" opacity=".3"/>
<text x="4.7" y="11.8" font-family="Liberation Sans, sans-serif" font-size="7.5" fill="#fff" font-weight="bold" textLength="56.3" lengthAdjust="spacingAndGlyphs">My Presentation</text>
<text x="4.7" y="20.7" font-family="Liberation Sans, sans-serif" font-size="7.3" fill="#fff" textLength="53.3" lengthAdjust="spacingAndGlyphs">Donec quis nunc</text>
<rect x="119.2" y="4.2" width="13.6" height="13.2" rx="2" fill="rgba(12,12,16,.86)"/><g fill="none" stroke="#bb93ea" stroke-width="0.7"><ellipse cx="126.0" cy="8.85" rx="1.2" ry="1.3" transform="rotate(0 126.0 11.5)"/><ellipse cx="126.0" cy="8.85" rx="1.2" ry="1.3" transform="rotate(72 126.0 11.5)"/><ellipse cx="126.0" cy="8.85" rx="1.2" ry="1.3" transform="rotate(144 126.0 11.5)"/><ellipse cx="126.0" cy="8.85" rx="1.2" ry="1.3" transform="rotate(216 126.0 11.5)"/><ellipse cx="126.0" cy="8.85" rx="1.2" ry="1.3" transform="rotate(288 126.0 11.5)"/></g>
</g></svg></div>
<div class="th" style="left:339.1px;top:450.3px;background:#ff7a00"><svg viewBox="0 0 136.2 76.5" preserveAspectRatio="none"><g transform="translate(-.1,-.3)"><defs><clipPath id="oct"><polygon points="87.5,5.9 113.6,5.9 131,22.7 131,48.8 113.6,65.7 87.5,65.7 69.9,48.8 69.9,22.7"/></clipPath></defs>
<rect x="-1" y="-1" width="139" height="79" fill="#ff7b00"/>
<path d="M9.90 5.9l60 60M11.40 5.9l60 60M12.90 5.9l60 60M14.40 5.9l60 60M15.90 5.9l60 60M17.40 5.9l60 60M18.90 5.9l60 60M20.40 5.9l60 60M21.90 5.9l60 60M23.40 5.9l60 60M24.90 5.9l60 60M26.40 5.9l60 60M27.90 5.9l60 60M29.40 5.9l60 60M30.90 5.9l60 60M32.40 5.9l60 60M33.90 5.9l60 60M35.40 5.9l60 60M36.90 5.9l60 60M38.40 5.9l60 60M39.90 5.9l60 60M41.40 5.9l60 60M42.90 5.9l60 60M44.40 5.9l60 60M45.90 5.9l60 60M47.40 5.9l60 60M48.90 5.9l60 60M50.40 5.9l60 60M51.90 5.9l60 60M53.40 5.9l60 60M54.90 5.9l60 60M56.40 5.9l60 60M57.90 5.9l60 60M59.40 5.9l60 60M60.90 5.9l60 60M62.40 5.9l60 60M63.90 5.9l60 60M65.40 5.9l60 60M66.90 5.9l60 60M68.40 5.9l60 60M69.90 5.9l60 60M71.40 5.9l60 60M72.90 5.9l60 60M74.40 5.9l60 60M75.90 5.9l60 60M77.40 5.9l60 60M78.90 5.9l60 60M80.40 5.9l60 60M81.90 5.9l60 60M83.40 5.9l60 60M84.90 5.9l60 60M86.40 5.9l60 60M87.90 5.9l60 60M89.40 5.9l60 60M90.90 5.9l60 60M92.40 5.9l60 60M93.90 5.9l60 60M95.40 5.9l60 60M96.90 5.9l60 60M98.40 5.9l60 60M99.90 5.9l60 60M101.40 5.9l60 60M102.90 5.9l60 60M104.40 5.9l60 60M105.90 5.9l60 60M107.40 5.9l60 60M108.90 5.9l60 60M110.40 5.9l60 60M111.90 5.9l60 60M113.40 5.9l60 60M114.90 5.9l60 60M116.40 5.9l60 60M117.90 5.9l60 60M119.40 5.9l60 60M120.90 5.9l60 60M122.40 5.9l60 60M123.90 5.9l60 60M125.40 5.9l60 60M126.90 5.9l60 60M128.40 5.9l60 60M129.90 5.9l60 60M131.40 5.9l60 60M132.90 5.9l60 60M134.40 5.9l60 60" clip-path="url(#oct)" stroke="#2a1000" stroke-width=".28" opacity=".6" fill="none"/><polygon points="87.5,5.9 113.6,5.9 131,22.7 131,48.8 113.6,65.7 87.5,65.7 69.9,48.8 69.9,22.7" fill="none" stroke="#5a2a00" stroke-width=".3"/>
<circle cx="100.4" cy="35.7" r="11.6" fill="#ff7b00" stroke="#5a2a00" stroke-width=".35"/>
<text x="4.5" y="11.4" font-family="Liberation Sans, sans-serif" font-size="7.3" fill="#120800" font-weight="bold" textLength="11" lengthAdjust="spacingAndGlyphs">My</text>
<text x="4.5" y="21.9" font-family="Liberation Sans, sans-serif" font-size="7.3" fill="#120800" font-weight="bold" textLength="49.4" lengthAdjust="spacingAndGlyphs">Presentation</text>
<text x="4.5" y="32" font-family="Liberation Sans, sans-serif" font-size="8" fill="#120800" textLength="42.6" lengthAdjust="spacingAndGlyphs">Donec quis</text>
<text x="4.5" y="41.8" font-family="Liberation Sans, sans-serif" font-size="8" fill="#120800" textLength="19.1" lengthAdjust="spacingAndGlyphs">nunc</text>
<text x="5" y="72.2" font-family="Liberation Sans, sans-serif" font-size="2" fill="#120800" textLength="4.2" lengthAdjust="spacingAndGlyphs">Author</text>
<text x="26.4" y="72.2" font-family="Liberation Sans, sans-serif" font-size="2" fill="#120800" textLength="3.6" lengthAdjust="spacingAndGlyphs">Date</text>
<rect x="119.2" y="4.2" width="13.6" height="13.2" rx="2" fill="rgba(12,12,16,.86)"/><g fill="none" stroke="#bb93ea" stroke-width="0.7"><ellipse cx="126.0" cy="8.85" rx="1.2" ry="1.3" transform="rotate(0 126.0 11.5)"/><ellipse cx="126.0" cy="8.85" rx="1.2" ry="1.3" transform="rotate(72 126.0 11.5)"/><ellipse cx="126.0" cy="8.85" rx="1.2" ry="1.3" transform="rotate(144 126.0 11.5)"/><ellipse cx="126.0" cy="8.85" rx="1.2" ry="1.3" transform="rotate(216 126.0 11.5)"/><ellipse cx="126.0" cy="8.85" rx="1.2" ry="1.3" transform="rotate(288 126.0 11.5)"/></g>
</g></svg></div>
<div class="th" style="left:492.1px;top:450.3px;background:#1496ff"><svg viewBox="0 0 136.2 76.5" preserveAspectRatio="none"><g transform="translate(-.1,-.3)"><rect x="-1" y="-1" width="139" height="79" fill="#1a94ff"/>
<polygon points="45.8,-0.5 64,44.6 32,51.3 54.7,69 47.1,77 137,77 137,25.3 123.7,32 109.4,10.9 96.8,32" fill="#05cc10"/>
<text x="4.7" y="22.3" font-family="Liberation Sans, sans-serif" font-size="9.6" fill="#000" font-weight="bold" textLength="81.5" lengthAdjust="spacingAndGlyphs" stroke="#000" stroke-width="0.3">My Presentation</text>
<text x="4.7" y="30.6" font-family="Liberation Sans, sans-serif" font-size="6.2" fill="#000" textLength="45.3" lengthAdjust="spacingAndGlyphs">Donec quis nunc</text>
<text x="4.7" y="71.5" font-family="Liberation Sans, sans-serif" font-size="2.6" fill="#000" textLength="20.2" lengthAdjust="spacingAndGlyphs">Author and Date</text>
<rect x="119.2" y="4.2" width="13.6" height="13.2" rx="2" fill="rgba(12,12,16,.86)"/><g fill="none" stroke="#bb93ea" stroke-width="0.7"><ellipse cx="126.0" cy="8.85" rx="1.2" ry="1.3" transform="rotate(0 126.0 11.5)"/><ellipse cx="126.0" cy="8.85" rx="1.2" ry="1.3" transform="rotate(72 126.0 11.5)"/><ellipse cx="126.0" cy="8.85" rx="1.2" ry="1.3" transform="rotate(144 126.0 11.5)"/><ellipse cx="126.0" cy="8.85" rx="1.2" ry="1.3" transform="rotate(216 126.0 11.5)"/><ellipse cx="126.0" cy="8.85" rx="1.2" ry="1.3" transform="rotate(288 126.0 11.5)"/></g>
</g></svg></div>
<div class="th" style="left:645.1px;top:450.3px;background:#241f38"><svg viewBox="0 0 136.2 76.5" preserveAspectRatio="none"><g transform="translate(-.1,-.3)"><defs>
<linearGradient id="fsky" x1="0" y1="0" x2="1" y2="1"><stop offset="0" stop-color="#5b8cd2"/><stop offset=".55" stop-color="#a9c6ea"/><stop offset="1" stop-color="#dbe7f3"/></linearGradient>
<linearGradient id="fp1" x1="0" y1="0" x2="1" y2="1"><stop offset="0" stop-color="#d2d5da"/><stop offset=".5" stop-color="#aaaeb4"/><stop offset="1" stop-color="#6c7078"/></linearGradient>
<linearGradient id="fp2" x1="0" y1="0" x2="1" y2="0"><stop offset="0" stop-color="#c3c6cb"/><stop offset=".5" stop-color="#a6aab0"/><stop offset="1" stop-color="#686d75"/></linearGradient>
<clipPath id="fclip"><rect x="5" y="-5" width="670" height="570"/></clipPath>
<filter id="fblur"><feGaussianBlur stdDeviation="2"/></filter>
</defs>
<rect x="-1" y="-1" width="139" height="79" fill="#241f3a"/>
<g transform="translate(46,0) scale(0.1385)" clip-path="url(#fclip)"><g filter="url(#fblur)">
<rect x="0" y="-10" width="680" height="580" fill="url(#fsky)"/>
<ellipse cx="180" cy="60" rx="110" ry="60" fill="#e4ecf5"/>
<ellipse cx="430" cy="250" rx="70" ry="80" fill="#d6e2f0"/>
<ellipse cx="80" cy="500" rx="140" ry="70" fill="#dfe8f2"/>
<ellipse cx="560" cy="380" rx="50" ry="100" fill="#d9e3ee"/>
<!-- dark top-left pipe underside -->
<path d="M0 -10H215L0 160Z" fill="#4b4e54"/>
<path d="M0 120L180 -10H215L0 160Z" fill="#6d7178"/>
<!-- right edge structure -->
<path d="M575 100L670 60V570H585L570 330Z" fill="#5f636a"/>
<path d="M600 150L660 140M596 210L660 205M600 270L660 268" stroke="#3f4348" stroke-width="8"/>
<!-- small ladder structure -->
<path d="M222 300H268V400H222Z" fill="#8a8e94"/>
<path d="M215 340H280" stroke="#5c6066" stroke-width="6"/>
<!-- thin vertical pipe -->
<rect x="478" y="350" width="44" height="220" fill="#b7bbc0"/>
<rect x="508" y="350" width="14" height="220" fill="#8b8f96"/>
<!-- lower-left pipe B -->
<path d="M-10 380L250 500" stroke="#6f737a" stroke-width="118"/>
<path d="M-10 368L250 488" stroke="url(#fp1)" stroke-width="92"/>
<!-- S-bend -->
<path d="M300 140C350 40 560 10 560 180C560 320 330 300 296 430L294 580" fill="none" stroke="#5c6068" stroke-width="128" stroke-linejoin="round"/>
<path d="M294 132C344 34 548 6 548 176C548 312 322 294 288 424L286 580" fill="none" stroke="url(#fp2)" stroke-width="108" stroke-linejoin="round"/>
<path d="M300 100C360 10 540 0 570 120" fill="none" stroke="#c9ccd1" stroke-width="26" opacity=".8"/>
<!-- Pipe A -->
<path d="M310 150L40 300" stroke="#62666e" stroke-width="172"/>
<path d="M300 134L30 284" stroke="url(#fp1)" stroke-width="142"/>
<path d="M168 140L250 290" stroke="#7d8188" stroke-width="7"/>
<path d="M245 52L352 238" stroke="#585c63" stroke-width="14"/>
<path d="M258 44L366 230" stroke="#aeb2b8" stroke-width="12"/>
<path d="M60 150L130 110" stroke="#d5d8dc" stroke-width="8"/>
<!-- top dark bits -->
<rect x="245" y="-10" width="70" height="36" fill="#2c2e32"/>
<rect x="500" y="-10" width="180" height="40" fill="#3a3d42"/>
<!-- red flags -->
<rect x="298" y="276" width="32" height="26" fill="#d4202e"/>
<!-- railings -->
<g stroke="#4a4e54" fill="none"><path d="M350 478L670 400" stroke-width="20"/><path d="M350 440L670 370M360 520L670 470" stroke-width="7"/><path d="M380 440V570M450 425V570M560 400V570M620 385V570" stroke-width="7"/></g>
<g stroke="#6a6e75" stroke-width="6" fill="none"><path d="M0 480L60 460L70 570M20 470V570M90 500L130 490V570"/></g>
</g></g>

<path d="M4.2 6.4H8.8M25.3 6.4H29" stroke="#fff" stroke-width=".7"/>
<text x="4.2" y="51" font-family="Liberation Mono, monospace" font-size="4.8" fill="#fff" textLength="5.2" lengthAdjust="spacingAndGlyphs">My</text>
<text x="4.2" y="55.6" font-family="Liberation Mono, monospace" font-size="4.8" fill="#fff" textLength="30" lengthAdjust="spacingAndGlyphs">Presentation</text>
<text x="4.2" y="67.6" font-family="Liberation Mono, monospace" font-size="4.8" fill="#fff" textLength="24.8" lengthAdjust="spacingAndGlyphs">Donec Quis</text>
<text x="4.2" y="72.2" font-family="Liberation Mono, monospace" font-size="4.8" fill="#fff" textLength="9.8" lengthAdjust="spacingAndGlyphs">Nunc</text>
<rect x="119.2" y="4.2" width="13.6" height="13.2" rx="2" fill="rgba(12,12,16,.86)"/><g fill="none" stroke="#bb93ea" stroke-width="0.7"><ellipse cx="126.0" cy="8.85" rx="1.2" ry="1.3" transform="rotate(0 126.0 11.5)"/><ellipse cx="126.0" cy="8.85" rx="1.2" ry="1.3" transform="rotate(72 126.0 11.5)"/><ellipse cx="126.0" cy="8.85" rx="1.2" ry="1.3" transform="rotate(144 126.0 11.5)"/><ellipse cx="126.0" cy="8.85" rx="1.2" ry="1.3" transform="rotate(216 126.0 11.5)"/><ellipse cx="126.0" cy="8.85" rx="1.2" ry="1.3" transform="rotate(288 126.0 11.5)"/></g>
</g></svg></div>
<div class="th" style="left:798.1px;top:450.3px;background:#964a12"><svg viewBox="0 0 136.2 76.5" preserveAspectRatio="none"><g transform="translate(-.1,-.3)"><rect x="-1" y="-1" width="139" height="79" fill="#93460f"/>
<path d="M4.9 5.5V71.5" stroke="#c98e5e" stroke-width=".35"/>
<text x="6.8" y="11.8" font-family="Liberation Serif, serif" font-size="8.6" fill="#fff" font-weight="bold">My</text>
<text x="6.8" y="21.8" font-family="Liberation Serif, serif" font-size="8.6" fill="#fff" font-weight="bold">Presentation</text>
<text x="6.8" y="29.8" font-family="Liberation Serif, serif" font-size="4" fill="#fff">Donec quis nunc</text>
<text x="6.8" y="71.6" font-family="Liberation Serif, serif" font-size="2.4" fill="#fff">Author</text>
</g></svg></div>
<div class="lb" style="left:33.1px;top:533px">Branding Modern</div>
<div class="lb" style="left:186.1px;top:533px">Business Modern</div>
<div class="lb" style="left:339.1px;top:533px">Startup Simple</div>
<div class="lb" style="left:492.1px;top:533px">Sales Bold</div>
<div class="lb" style="left:645.1px;top:533px">Factory</div>
</div>
</body>
</html>
